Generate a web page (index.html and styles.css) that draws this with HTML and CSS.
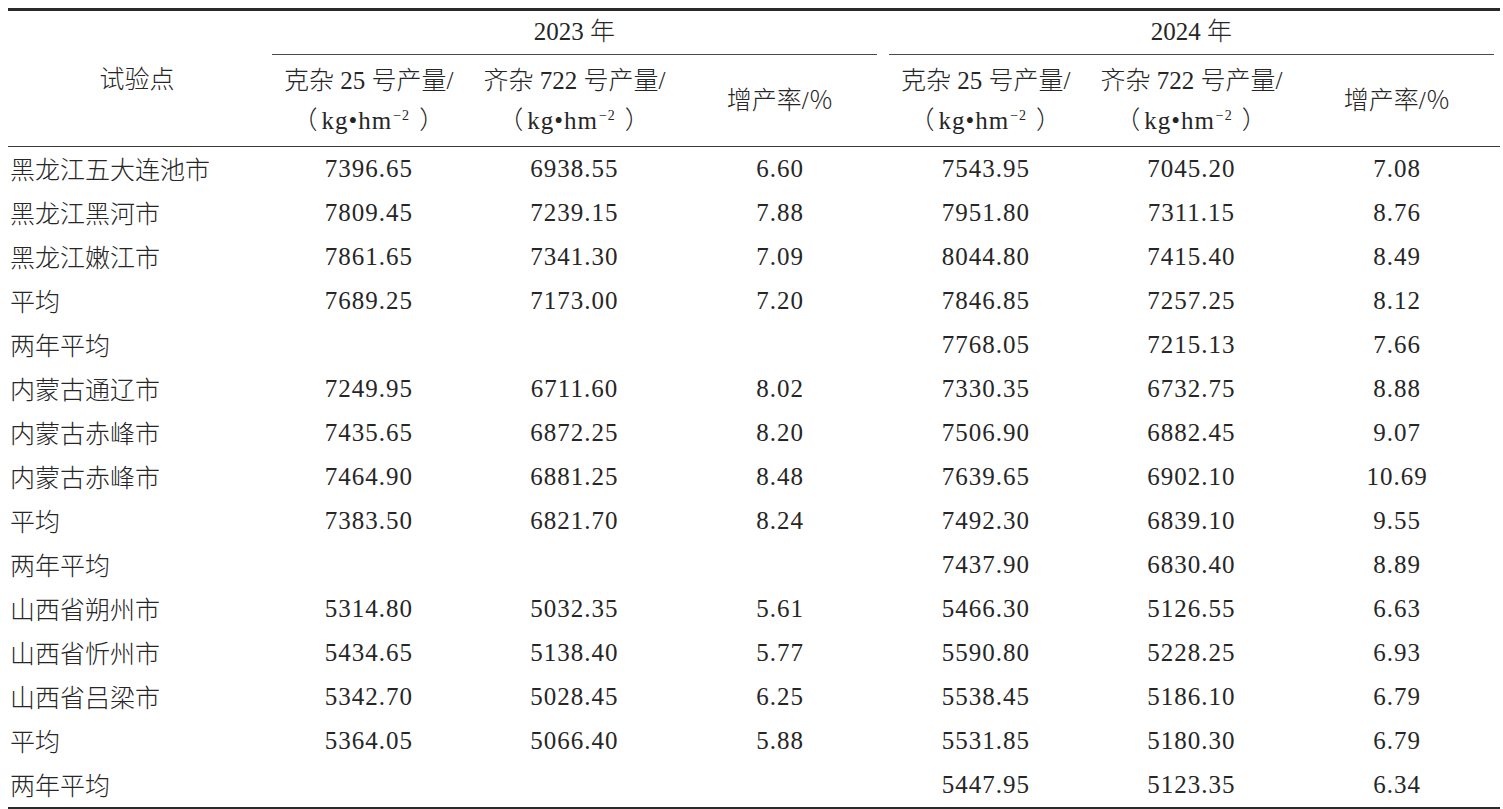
FILE: index.html
```html
<!DOCTYPE html>
<html lang="zh-CN">
<head>
<meta charset="utf-8">
<title>试验产量表</title>
<link rel="stylesheet" href="styles.css">
</head>
<body>
<div class="page">
<table class="yield">
  <colgroup>
    <col class="c-site">
    <col class="c-num"><col class="c-num"><col class="c-num">
    <col class="c-num"><col class="c-num"><col class="c-num">
  </colgroup>
  <thead>
    <tr class="r-year">
      <th rowspan="2" class="h-site">试验点</th>
      <th colspan="3" class="h-year"><div class="year-label">2023 年</div></th>
      <th colspan="3" class="h-year"><div class="year-label">2024 年</div></th>
    </tr>
    <tr class="r-sub">
      <th>克杂 25 号产量/<br><span class="unit"><span class="pl">（</span>kg•hm<sup>−2</sup><span class="pr">）</span></span></th>
      <th>齐杂 722 号产量/<br><span class="unit"><span class="pl">（</span>kg•hm<sup>−2</sup><span class="pr">）</span></span></th>
      <th>增产率/％</th>
      <th>克杂 25 号产量/<br><span class="unit"><span class="pl">（</span>kg•hm<sup>−2</sup><span class="pr">）</span></span></th>
      <th>齐杂 722 号产量/<br><span class="unit"><span class="pl">（</span>kg•hm<sup>−2</sup><span class="pr">）</span></span></th>
      <th>增产率/％</th>
    </tr>
  </thead>
  <tbody>
    <tr><td class="site">黑龙江五大连池市</td><td>7396.65</td><td>6938.55</td><td>6.60</td><td>7543.95</td><td>7045.20</td><td>7.08</td></tr>
    <tr><td class="site">黑龙江黑河市</td><td>7809.45</td><td>7239.15</td><td>7.88</td><td>7951.80</td><td>7311.15</td><td>8.76</td></tr>
    <tr><td class="site">黑龙江嫩江市</td><td>7861.65</td><td>7341.30</td><td>7.09</td><td>8044.80</td><td>7415.40</td><td>8.49</td></tr>
    <tr><td class="site">平均</td><td>7689.25</td><td>7173.00</td><td>7.20</td><td>7846.85</td><td>7257.25</td><td>8.12</td></tr>
    <tr><td class="site">两年平均</td><td></td><td></td><td></td><td>7768.05</td><td>7215.13</td><td>7.66</td></tr>
    <tr><td class="site">内蒙古通辽市</td><td>7249.95</td><td>6711.60</td><td>8.02</td><td>7330.35</td><td>6732.75</td><td>8.88</td></tr>
    <tr><td class="site">内蒙古赤峰市</td><td>7435.65</td><td>6872.25</td><td>8.20</td><td>7506.90</td><td>6882.45</td><td>9.07</td></tr>
    <tr><td class="site">内蒙古赤峰市</td><td>7464.90</td><td>6881.25</td><td>8.48</td><td>7639.65</td><td>6902.10</td><td>10.69</td></tr>
    <tr><td class="site">平均</td><td>7383.50</td><td>6821.70</td><td>8.24</td><td>7492.30</td><td>6839.10</td><td>9.55</td></tr>
    <tr><td class="site">两年平均</td><td></td><td></td><td></td><td>7437.90</td><td>6830.40</td><td>8.89</td></tr>
    <tr><td class="site">山西省朔州市</td><td>5314.80</td><td>5032.35</td><td>5.61</td><td>5466.30</td><td>5126.55</td><td>6.63</td></tr>
    <tr><td class="site">山西省忻州市</td><td>5434.65</td><td>5138.40</td><td>5.77</td><td>5590.80</td><td>5228.25</td><td>6.93</td></tr>
    <tr><td class="site">山西省吕梁市</td><td>5342.70</td><td>5028.45</td><td>6.25</td><td>5538.45</td><td>5186.10</td><td>6.79</td></tr>
    <tr><td class="site">平均</td><td>5364.05</td><td>5066.40</td><td>5.88</td><td>5531.85</td><td>5180.30</td><td>6.79</td></tr>
    <tr><td class="site">两年平均</td><td></td><td></td><td></td><td>5447.95</td><td>5123.35</td><td>6.34</td></tr>
  </tbody>
</table>
</div>
</body>
</html>
```

FILE: styles.css
```css
html, body {
  margin: 0;
  padding: 0;
  background: #ffffff;
}

.page {
  padding: 8px 3px 0 8px;
}

.yield {
  border-collapse: collapse;
  table-layout: fixed;
  width: 1492px;
  font-family: "Liberation Serif", "Noto Sans CJK SC", serif;
  font-size: 25px;
  font-weight: 300;
  color: #262626;
  border-top: 3px solid #2a2a2a;
  border-bottom: 3px solid #2a2a2a;
  text-spacing-trim: space-all;
}

.c-site {
  width: 258px;
}

.yield th {
  font-weight: 300;
  padding: 0;
  text-align: center;
}

.yield th.h-site {
  vertical-align: middle;
  border-bottom: 1px solid #3a3a3a;
  padding-bottom: 3px;
}

.yield th.h-year {
  height: 44px;
  padding: 0 6px;
  vertical-align: bottom;
}

.year-label {
  height: 43px;
  line-height: 42px;
  border-bottom: 1px solid #4a4a4a;
}

.r-sub th {
  height: 91px;
  line-height: 40px;
  border-bottom: 1px solid #3a3a3a;
  vertical-align: middle;
}

.unit {
  letter-spacing: 1px;
}

.unit .pl {
  margin-right: 3px;
}

.unit .pr {
  margin-left: 6px;
}

.r-sub sup {
  font-size: 14px;
  line-height: 0;
  vertical-align: 9px;
  padding: 0 3px 0 1px;
}

.yield td {
  height: 44px;
  padding: 0;
  text-align: center;
  vertical-align: middle;
  letter-spacing: 1px;
}

.yield td.site {
  height: 41px;
  text-align: left;
  padding: 0 0 3px 2px;
  letter-spacing: 0;
}
```
